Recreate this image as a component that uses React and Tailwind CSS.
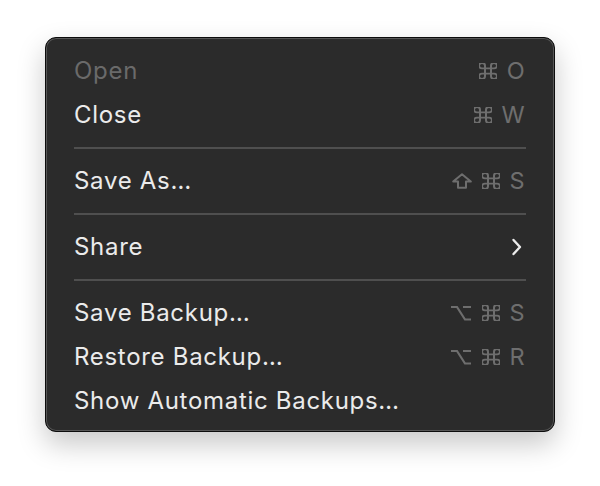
import React from 'react';

const items = [
  { type: 'item', label: 'Open', keys: ['cmd', 'O'], disabled: true },
  { type: 'item', label: 'Close', keys: ['cmd', 'W'] },
  { type: 'sep' },
  { type: 'item', label: 'Save As…', keys: ['shift', 'cmd', 'S'] },
  { type: 'sep' },
  { type: 'item', label: 'Share', submenu: true },
  { type: 'sep' },
  { type: 'item', label: 'Save Backup…', keys: ['opt', 'cmd', 'S'] },
  { type: 'item', label: 'Restore Backup…', keys: ['opt', 'cmd', 'R'] },
  { type: 'item', label: 'Show Automatic Backups…' },
];

const KEY_COLOR = '#6e6e6e';

// modifier glyphs drawn as svg so they match the mac menu look
function KeyGlyph({ k }) {
  if (k === 'cmd') {
    return (
      <svg width="18" height="16" viewBox="3 3 18 18" preserveAspectRatio="none" fill="none">
        <path
          d="M15 6v12a3 3 0 1 0 3-3H6a3 3 0 1 0 3 3V6a3 3 0 1 0-3 3h12a3 3 0 1 0-3-3"
          stroke={KEY_COLOR}
          strokeWidth="2"
          strokeLinecap="round"
          strokeLinejoin="round"
        />
      </svg>
    );
  }
  if (k === 'shift') {
    return (
      <svg width="20" height="16" viewBox="0 0 20 16" fill="none">
        <path d="M10 1.2 L18.8 8.6 H14 V14.8 H6 V8.6 H1.2 Z" stroke={KEY_COLOR} strokeWidth="2" strokeLinejoin="round" />
      </svg>
    );
  }
  if (k === 'opt') {
    return (
      <svg width="22" height="16" viewBox="0 0 22 16" fill="none">
        <path d="M1 2 H7 L15 14.5 H21 M13 2 H21" stroke={KEY_COLOR} strokeWidth="2.2" />
      </svg>
    );
  }
  return <span className="text-[23.5px] leading-none tracking-[0.3px] text-[#6e6e6e]">{k}</span>;
}

function Chevron() {
  return (
    <svg width="12" height="18" viewBox="0 0 12 18" fill="none" className="mr-[3px]">
      <path d="M2.5 2 L9 9 L2.5 16" stroke="#ececec" strokeWidth="2.4" strokeLinecap="round" strokeLinejoin="round" />
    </svg>
  );
}

export default function App() {
  return (
    <div className="w-[600px] h-[486px] bg-white flex items-start justify-center pt-[37px] font-['Inter',sans-serif]">
      <div className="w-[510px] rounded-[11px] bg-[#2b2b2b] border border-[#0c0c0c] shadow-[0_12px_28px_rgba(0,0,0,0.22),inset_0_0_0_1px_#565656] pt-[11px] pb-[8px] px-[28px]">
        {items.map((it, i) =>
          it.type === 'sep' ? (
            <div key={i} className="h-[22px] flex items-center">
              <div className="h-[2px] w-full bg-[#4f4f4f]" />
            </div>
          ) : (
            <div key={i} className="h-[44px] flex items-center justify-between">
              <span className={`text-[24px] tracking-[0.7px] ${it.disabled ? 'text-[#6a6a6a]' : 'text-[#ebebeb]'}`}>
                {it.label}
              </span>
              {it.keys && (
                <span className="flex items-center gap-[10px] mr-[1px]">
                  {it.keys.map((k, j) => (
                    <KeyGlyph key={j} k={k} />
                  ))}
                </span>
              )}
              {it.submenu && <Chevron />}
            </div>
          )
        )}
      </div>
    </div>
  );
}
